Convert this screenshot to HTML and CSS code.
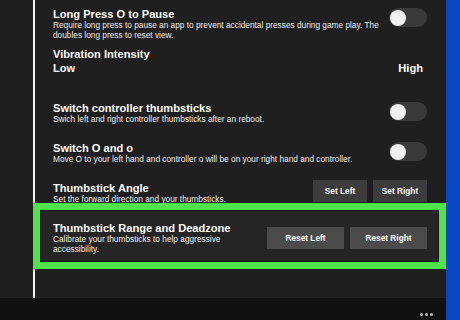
FILE: index.html
```html
<!doctype html>
<html>

<head>
  <meta charset="UTF-8">
  <title>Controller Settings</title>
  <link rel="stylesheet" href="styles.css">
</head>

<body>
  <div class="screen">
    <div class="main">
      <div class="content">
        <div class="rail"></div>

        <div class="panel">
          <div class="row first">
            <div class="text">
              <div class="title">Long Press O to Pause</div>
              <div class="desc">Require long press to pause an app to prevent accidental presses during game play. The
                doubles long press to reset view.</div>
            </div>
            <span class="toggle"></span>
          </div>

          <div class="row vibration">
            <div class="text">
              <div class="title">Vibration Intensity</div>
              <div class="range">
                <span>Low</span>
                <span class="high">High</span>
              </div>
            </div>
          </div>

          <div class="row switch">
            <div class="text">
              <div class="title">Switch controller thumbsticks</div>
              <div class="desc">Swich left and right controller thumbsticks after an reboot.</div>
            </div>
            <span class="toggle"></span>
          </div>

          <div class="row">
            <div class="text">
              <div class="title">Switch O and o</div>
              <div class="desc">Move O to your left hand and controller o will be on your right hand and controller.</div>
            </div>
            <span class="toggle"></span>
          </div>

          <div class="row">
            <div class="text">
              <div class="title">Thumbstick Angle</div>
              <div class="desc">Set the forward direction and your thumbsticks.</div>
            </div>
            <div class="buttons angle">
              <button class="btn small">Set Left</button>
              <button class="btn small">Set Right</button>
            </div>
          </div>

          <div class="row highlight">
            <div class="text">
              <div class="title">Thumbstick Range and Deadzone</div>
              <div class="desc">Calibrate your thumbsticks to help aggressive accessibility.</div>
            </div>
            <div class="buttons">
              <button class="btn wide">Reset Left</button>
              <button class="btn wide">Reset Right</button>
            </div>
          </div>
        </div>
      </div>

      <div class="taskbar">
        <span class="dots"><i></i><i></i><i></i></span>
      </div>
    </div>

    <div class="edge"></div>
  </div>
</body>

</html>
```

FILE: styles.css
```css
body {
  margin: 0;
  background: #1f1f1f;
  font: normal 100%/1.2 "Liberation Sans", Arial, sans-serif;
  color: #fff;
  overflow: hidden;
}

.screen {
  display: flex;
  width: 460px;
  height: 320px;
}

.main {
  flex: 1;
  display: flex;
  flex-direction: column;
}

.content {
  flex: 1;
  display: flex;
  align-items: flex-start;
}

.rail {
  width: 33px;
  flex: none;
}

.panel {
  flex: 1;
  height: 298px;
  box-sizing: border-box;
  border-left: 2px solid #f4f4f4;
  padding: 8px 19px 0 18px;
}

.edge {
  width: 14px;
  background: #0747c6;
}

/* setting rows */
.row {
  display: flex;
  align-items: flex-start;
  gap: 10px;
}

.row.vibration {
  margin-top: 8px;
}

.row.switch {
  margin-top: 28px;
}

.row + .row:not(.vibration):not(.switch) {
  margin-top: 18px;
}

.text {
  flex: 1;
}

.title {
  font-size: 11.1px;
  font-weight: bold;
  line-height: 12px;
}

.desc {
  font-size: 8.3px;
  line-height: 10px;
  color: #ececec;
}

.range {
  display: flex;
  justify-content: space-between;
  margin-top: 2px;
  padding-right: 4px;
  font-size: 11.1px;
  font-weight: bold;
  line-height: 12px;
}

.toggle {
  position: relative;
  width: 38px;
  height: 19px;
  flex: none;
  border-radius: 10px;
  background: #3a3a3a;
}

.toggle::after {
  content: "";
  position: absolute;
  left: 1px;
  top: 1.5px;
  width: 16px;
  height: 16px;
  border-radius: 50%;
  background: #f0f0f0;
}

/* buttons */
.buttons {
  display: flex;
  gap: 6px;
}

.buttons.angle {
  margin-top: -2px;
}

.btn {
  height: 22px;
  border: 0;
  padding: 0;
  font: bold 8.3px "Liberation Sans", Arial, sans-serif;
  color: #fff;
}

.btn.small {
  width: 54px;
  background: #3c3c3c;
}

.btn.wide {
  width: 77px;
  background: #4b4b4b;
}

/* green highlight box */
.row.highlight {
  margin: -1px -19px 0 -20px !important;
  align-items: center;
  border: 7px solid #4fe34c;
  padding: 12px 12px 8px 13px;
  background: #252525;
  box-shadow: inset 0 0 0 1px #111;
}

/* bottom bar */
.taskbar {
  height: 18px;
  background: #111;
  display: flex;
  justify-content: flex-end;
  align-items: flex-end;
  padding: 0 13px 4px 0;
}

.dots {
  display: flex;
  gap: 2px;
}

.dots i {
  width: 3px;
  height: 3px;
  border-radius: 50%;
  background: #bbb;
}
```
